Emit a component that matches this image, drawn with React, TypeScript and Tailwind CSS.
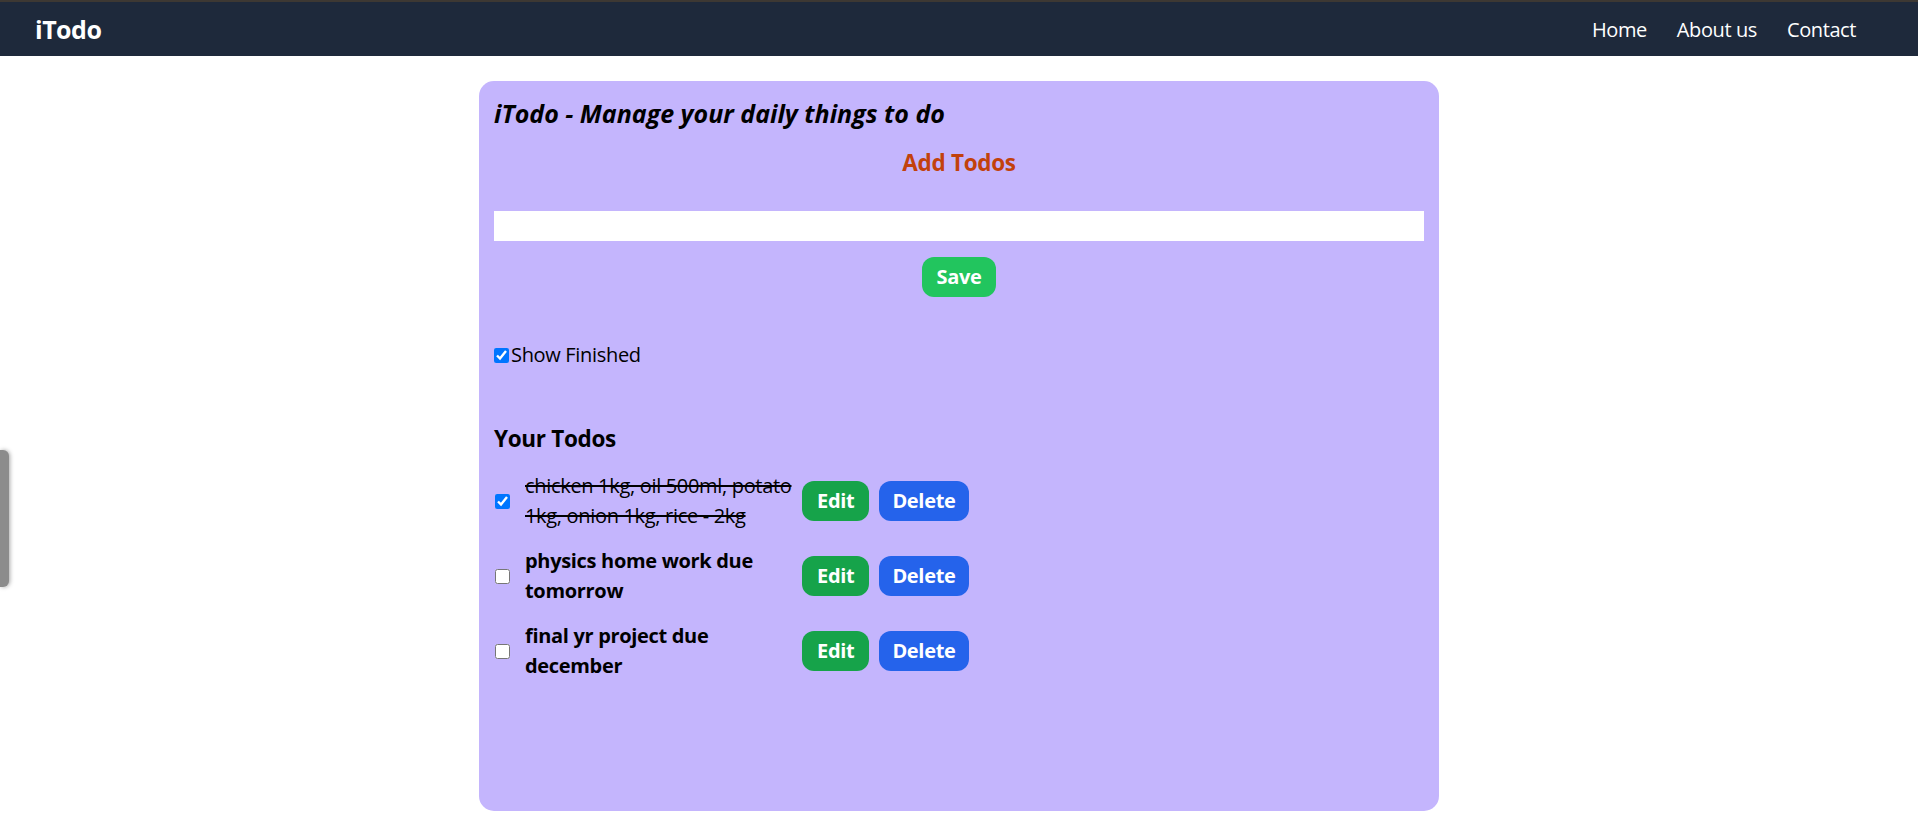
const todos = [
  { text: "chicken 1kg, oil 500ml, potato 1kg, onion 1kg, rice - 2kg", done: true },
  { text: "physics home work due tomorrow", done: false },
  { text: "final yr project due december", done: false },
];

const font = { fontFamily: '"Open Sans", "Noto Sans", sans-serif' };

export default function App() {
  return (
    <div className="min-h-[830px] bg-white relative" style={font}>
      <nav className="h-[56px] bg-[#1e293b] border-t-2 border-[#3d3833] flex items-center justify-between pl-[35px] pr-[62px] pt-[2px] text-white">
        <span className="text-[25px] font-bold tracking-[-0.02em]">iTodo</span>
        <ul className="flex gap-[30px] text-[20px] tracking-[-0.02em]">
          <li className="cursor-pointer">Home</li>
          <li className="cursor-pointer">About us</li>
          <li className="cursor-pointer">Contact</li>
        </ul>
      </nav>

      <div className="mx-auto mt-[25px] w-[960px] h-[730px] rounded-[15px] bg-[#c4b5fd] p-[15px] tracking-[-0.02em]">
        <h1 className="text-[25px] leading-[35px] font-bold italic text-black tracking-normal">iTodo - Manage your daily things to do</h1>

        <div className="flex flex-col mt-[14px]">
          <h2 className="text-[22.5px] leading-[35px] font-bold text-[#c2410c] text-center">Add Todos</h2>
          <input type="text" className="mt-[31px] w-full h-[30px] bg-white px-2 outline-none" />
          <div className="flex justify-center mt-[16px]">
            <button className="h-[40px] px-[14px] rounded-[12px] bg-[#22c55e] text-white text-[20px] font-bold">Save</button>
          </div>
        </div>

        <label className="flex items-center mt-[43px] h-[30px] text-[20px] text-black">
          <input type="checkbox" defaultChecked className="w-[15px] h-[15px] m-0 mr-[2px]" />
          Show Finished
        </label>

        <h2 className="mt-[51px] text-[22.5px] leading-[35px] font-bold text-black">Your Todos</h2>

        <div className="flex flex-col gap-[15px] mt-[15px]">
          {todos.map((t, i) => (
            <div key={i} className="flex items-center">
              <input type="checkbox" defaultChecked={t.done} className="w-[15px] h-[15px] m-0 ml-[1px]" />
              <div className={`ml-[15px] w-[274px] text-[20px] leading-[30px] text-black ${t.done ? "line-through" : "font-bold"}`}>
                {t.text}
              </div>
              <div className="flex gap-[10px] ml-[3px]">
                <button className="h-[40px] px-[15px] rounded-[12px] bg-[#16a34a] text-white text-[20px] font-bold">Edit</button>
                <button className="h-[40px] px-[13px] rounded-[12px] bg-[#2563eb] text-white text-[20px] font-bold">Delete</button>
              </div>
            </div>
          ))}
        </div>
      </div>

      <div className="absolute left-0 top-[450px] w-[9px] h-[137px] rounded-r-[6px] bg-[#8c8c8c] shadow-[1px_0_4px_rgba(0,0,0,0.35)]" />
    </div>
  );
}
